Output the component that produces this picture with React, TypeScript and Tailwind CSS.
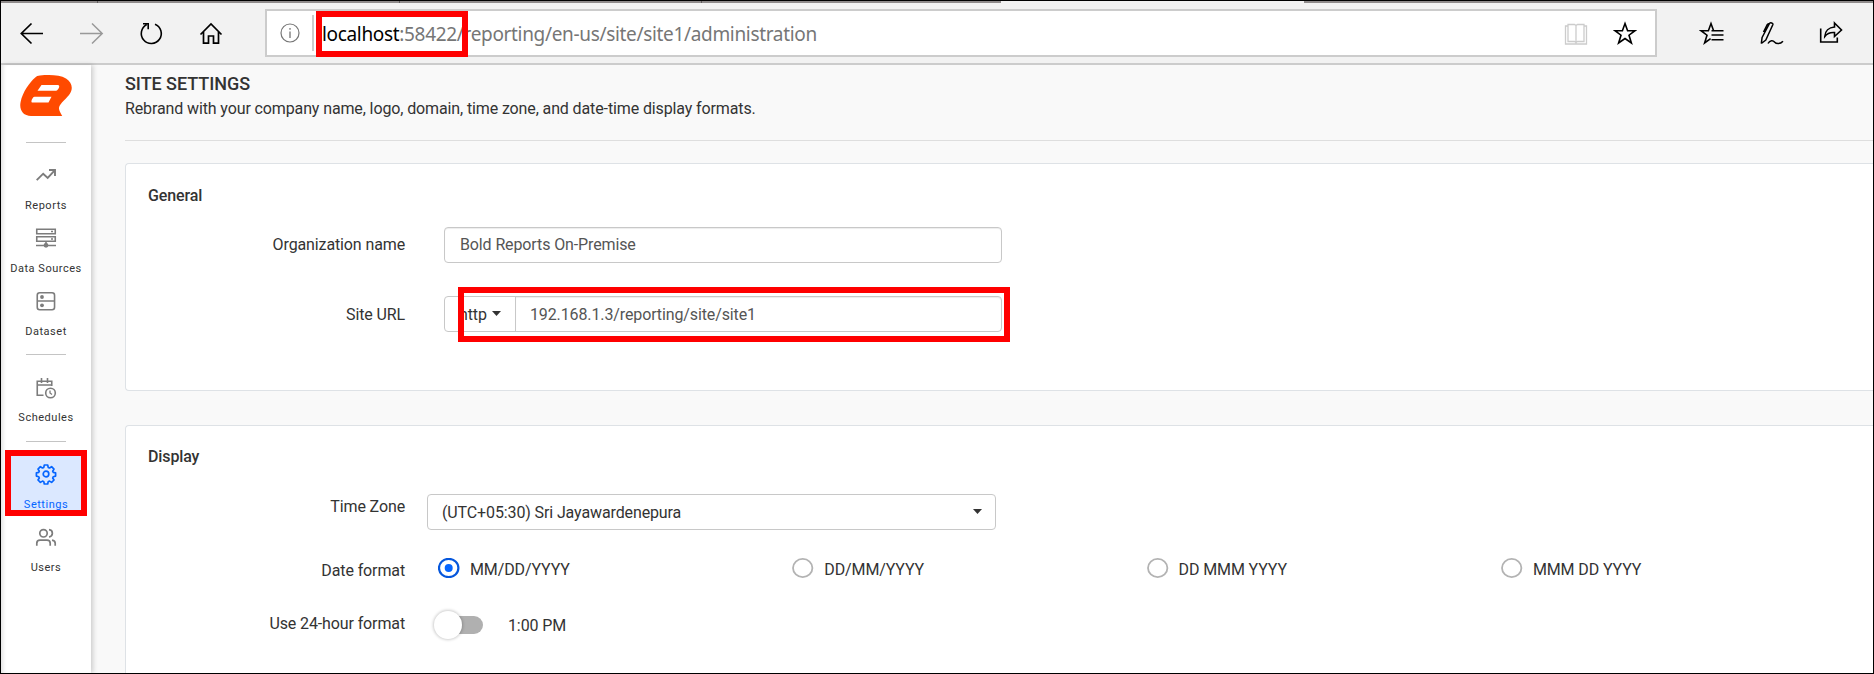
import type { ReactNode } from "react";

type IconProps = { children: ReactNode; className?: string; box?: string };

function Icon({ children, className = "", box = "0 0 24 24" }: IconProps) {
  return (
    <svg viewBox={box} fill="none" stroke="currentColor" className={"block shrink-0 " + className}>
      {children}
    </svg>
  );
}

function Mark({ className }: { className: string }) {
  return <div className={"pointer-events-none absolute z-20 border-6 border-[#ff0000] " + className} />;
}

function Caret() {
  return (
    <svg viewBox="0 0 9 5" className="block h-[5px] w-[9px] shrink-0" fill="#333">
      <path d="M0 0h9L4.5 5z" />
    </svg>
  );
}

function TabEdge() {
  return (
    <div className="flex h-[2px] w-full bg-[#8f8b8b]">
      <div className="w-[97px] border-r border-[#5f5b5b]" />
      <div className="w-[302px] border-r border-[#5f5b5b]" />
      <div className="w-[302px] border-r border-[#5f5b5b]" />
      <div className="w-[299px]" />
      <div className="w-[303px] bg-[#f2f2f2]" />
    </div>
  );
}

function Toolbar() {
  return (
    <header className="flex h-[62px] w-full items-start border-b-2 border-b-[#cccccc] bg-[#f2f2f2]">
      <div className="flex w-[264px] pt-[16px] pl-[18px] text-black">
        <Icon className="h-7 w-[60px]" box="0 0 60 28">
          <path strokeWidth="1.7" d="M24 14.5H2M12.5 4.5L2.3 14.5l10.2 10" />
        </Icon>
        <Icon className="h-7 w-[60px] text-[#999]" box="0 0 60 28">
          <path strokeWidth="1.5" d="M1 14.5h22.5M13 4.5l10.2 10-10.2 10" />
        </Icon>
        <Icon className="h-7 w-[60px]" box="0 0 60 28">
          <path strokeWidth="1.6" d="M16 5.2A10 10 0 1 1 7.7 5.6M4 4.8h5.2v5.5" />
        </Icon>
        <Icon className="h-7 w-[60px]" box="0 0 60 28">
          <path strokeWidth="1.7" d="M1.5 15.500L12 5l10.500 10.500M4.500 13v11.200h5V17h5v7.200h5V13" />
        </Icon>
      </div>
      <div className="mt-[6px] flex h-[48px] w-[1392px] items-center border-2 border-[#cccccc] bg-white">
        <Icon className="ml-[13px] h-5 w-5 text-[#767676]" box="0 0 20 20">
          <circle cx="10" cy="10" r="9" strokeWidth="1.2" />
          <path d="M10 8.5V15M10 5v1.7" strokeWidth="1.3" />
        </Icon>
        <div className="ml-[12px] h-9 w-[2px] bg-[#cccccc]" />
        <div className="ml-[8px] pt-[2px] font-['Noto_Sans',sans-serif] text-[19px] leading-6 tracking-[-0.33px] whitespace-nowrap text-[#767676]">
          <span className="text-black">localhost</span>:58422/reporting/en-us/site/site1/administration
        </div>
        <Icon className="mt-[2px] mr-[25px] ml-auto h-[22px] w-[24px] text-[#cccccc]" box="0 0 24 22">
          <path strokeWidth="1.3" d="M4 3H1.5v18h21V3H20M4 1.5h6.5l1.500 1 1.500-1H20v17h-6.500l-1.500 1-1.500-1H4zM12 2.500v18" />
        </Icon>
        <Icon className="mr-[18px] h-6 w-6 text-black" box="0 0 24 24">
          <path strokeWidth="1.6" d="M12 2.500l2.600 7.200h7.400l-6 4.500 2.400 7.800L12 17.500 5.600 22 8 14.200 2 9.700h7.400z" />
        </Icon>
      </div>
      <div className="flex pt-[18px] pl-[42px] text-black">
        <Icon className="h-6 w-[60px]" box="0 0 60 24">
          <path strokeWidth="1.6" d="M24.500 9.700H14.600L12 2.500 9.400 9.700H2l6 4.500L5.600 22l6-4.300M12.500 14h12M12.500 18.800h12M12.500 9.700h12" />
        </Icon>
        <Icon className="h-6 w-[60px]" box="0 0 60 24">
          <path strokeWidth="1.5" d="M2.300 22.500l.8-6L10.500 2.500c.8-1.400 4-.6 3.300 1.300L6.800 19l-4.500 3.500M4.500 11l3.500-7c.6-1 1.500-1.500 2.500-1.500M9 22.500c2-3.500 5-3.500 6.500-1.500 1.700 2 5.500 2.500 8.500-.8" />
        </Icon>
        <Icon className="h-6 w-[24px]" box="0 0 24 24">
          <path strokeWidth="1.6" d="M1.700 7.500V21h16.600v-4.500M15.500 2l7 7-7 6.500v-4c-4-.3-7.500 1-9.700 4C6 10 10 6.500 15.500 6z" />
        </Icon>
      </div>
    </header>
  );
}

function NavItem({ label, active, children }: { label: string; active?: boolean; children: ReactNode }) {
  return (
    <div className={"flex h-[63px] w-full flex-col items-center pt-[11px] " + (active ? "text-[#0565ff]" : "text-[#7c7c7c]")}>
      <Icon className="h-5 w-5 overflow-visible" box="0 0 20 20">
        {children}
      </Icon>
      <span className={"mt-[13px] text-[11px] leading-4 tracking-[0.52px] whitespace-nowrap " + (active ? "" : "text-[#333]")}>{label}</span>
    </div>
  );
}

function Rule({ className }: { className: string }) {
  return (
    <div className={"flex w-full justify-center " + className}>
      <div className="h-px w-10 bg-[#c4c4c4]" />
    </div>
  );
}

function Sidebar() {
  return (
    <aside className="z-10 flex h-full w-[90px] shrink-0 flex-col items-center bg-white shadow-[inset_4px_0_4px_-2px_rgba(0,0,0,0.12),2px_0_5px_rgba(0,0,0,0.18)]">
      <svg viewBox="0 0 52 41" className="mt-[10px] block h-[41px] w-[52px]">
        <path fill="#ff4a00" d="M20 .5C30-.4 40-.1 46 3.500c5 3 6.800 8 5.200 12.500-1.700 5.500-9 10-11.700 15-1.500 3.200.5 6 2.700 10H11C3 41-1 35 .6 27 2.500 17 10 7 15 2.700 16.500 1.300 18 .6 20 .5z" />
        <path fill="#fff" d="M21.500 10h16.200c1.700 0 2 1.400 1 3.200-.8 1.600-2 2.600-3.700 2.600H17.500zM14.500 21.700h17l-3 5.800H12.300c-1.300 0-.9-2.500.2-4 .5-.8 1-1.800 2-1.800z" />
      </svg>
      <Rule className="mt-[26px] h-[12px]" />
      <NavItem label="Reports">
        <path strokeWidth="1.9" d="M.7 15.200l6.500-6.500 4.500 4.200 7-7.500M13 5h6v6" />
      </NavItem>
      <NavItem label="Data Sources">
        <path strokeWidth="1.6" d="M.75 1.250h18.500v4.500H.75zM.75 8.750h18.500v4.500H.75zM15 3.500h2M15 11h2M0 17.500h20M10 13v4" />
        <circle cx="10" cy="17.3" r="2.4" fill="currentColor" stroke="none" />
      </NavItem>
      <NavItem label="Dataset">
        <rect x="1.25" y="1.75" width="17.3" height="17" rx="2.5" strokeWidth="1.6" />
        <path strokeWidth="1.5" d="M1 10h17.5" />
        <circle cx="6" cy="6" r="1.9" fill="currentColor" stroke="none" />
        <circle cx="6" cy="14.3" r="1.9" fill="currentColor" stroke="none" />
      </NavItem>
      <Rule className="h-[23px] pt-[11px]" />
      <NavItem label="Schedules">
        <path strokeWidth="1.6" d="M7.500 18.200H1.250V4.200h14.500V9M1.500 8h14M5.500 1v5M11.500 1v5" />
        <circle cx="14.5" cy="16" r="4.8" strokeWidth="1.6" />
        <path strokeWidth="1.3" d="M14 13.500V16l2 1.500" />
      </NavItem>
      <Rule className="h-[24px] pt-[12px]" />
      <div className="w-[72px] bg-[#dbe8ff]">
        <NavItem label="Settings" active>
          <circle cx="10" cy="10" r="2.8" strokeWidth="1.7" />
          <path
            strokeWidth="1.7"
            strokeLinejoin="round"
            d="M8.300 1h3.400l.5 2.400 1.300.6 2.100-1.300 2.400 2.400-1.300 2.100.6 1.200 2.300.5v3.200l-2.300.6-.6 1.300 1.300 2-2.400 2.400-2.100-1.300-1.300.6-.5 2.300H8.300l-.5-2.300-1.300-.6-2.100 1.300L2 16l1.300-2-.6-1.300-2.300-.6V8.900l2.300-.5.6-1.200L2 5.100l2.400-2.400L6.500 4l1.300-.6z"
          />
        </NavItem>
      </div>
      <NavItem label="Users">
        <circle cx="7.5" cy="6.300" r="3.7" strokeWidth="1.7" />
        <path strokeWidth="1.7" d="M.8 18.800v-2.500c0-2 1.500-3.200 3.200-3.200h7c1.800 0 3.200 1.200 3.200 3.200v2.500M13 2.700c4.500.5 4.500 6.700 0 7.300M16 13.100c2 .3 3.200 1.500 3.200 3.200v2.500" />
      </NavItem>
    </aside>
  );
}

function Label({ children, className = "" }: { children: ReactNode; className?: string }) {
  return <div className={"w-[279px] shrink-0 text-right " + className}>{children}</div>;
}

function Radio({ label, checked }: { label: string; checked?: boolean }) {
  return (
    <div className="flex w-[354.3px] shrink-0 items-start">
      <svg viewBox="0 0 22 20" className="block h-5 w-[22px]" fill="none">
        <ellipse cx="10.7" cy="10" rx="9.7" ry="9.1" strokeWidth={checked ? 2.2 : 1.8} stroke={checked ? "#0657dc" : "#b3b3b3"} />
        {checked && <circle cx="10.7" cy="10" r="4" fill="#0565ff" />}
      </svg>
      <span className="ml-[10px] pt-[2px] leading-5">{label}</span>
    </div>
  );
}

const field = "flex h-9 items-center rounded border border-[#c8c8c8] bg-white";
const card = "w-full rounded-l border border-r-0 border-[#dee2e6] bg-white";

function Settings() {
  return (
    <main className="flex min-w-0 flex-1 flex-col overflow-hidden bg-[#f9f9f9] pl-[34px]">
      <div className="h-[76px] shrink-0 border-b border-[#dedede]">
        <h1 className="pt-[8px] text-[18px] leading-[22px] font-medium tracking-[-0.05px]">SITE SETTINGS</h1>
        <p className="mt-[4px] leading-5">Rebrand with your company name, logo, domain, time zone, and date-time display formats.</p>
      </div>
      <section className={card + " mt-[22px] h-[228px] shrink-0"}>
        <h2 className="pt-[22px] pl-[22px] leading-5 font-medium">General</h2>
        <div className="mt-[21px] flex items-center">
          <Label>Organization name</Label>
          <div className={field + " ml-[39px] w-[558px] pl-[15px] text-[#555] shadow-[inset_0_1px_1px_rgba(0,0,0,0.075)]"}>Bold Reports On-Premise</div>
        </div>
        <div className="mt-[33px] flex items-center">
          <Label className="pt-[2px]">Site URL</Label>
          <div className={field + " ml-[39px] w-[558px]"}>
            <div className="flex h-full w-[71px] items-center gap-[5px] border-r border-[#c8c8c8] pt-[2px] pl-[14px]">
              http
              <span className="pb-[3px]">
                <Caret />
              </span>
            </div>
            <div className="flex h-full flex-1 items-center rounded-r pt-[2px] pl-[14px] text-[#555] shadow-[inset_0_1px_1px_rgba(0,0,0,0.075)]">192.168.1.3/reporting/site/site1</div>
          </div>
        </div>
      </section>
      <section className={card + " mt-[34px] h-[260px] shrink-0"}>
        <h2 className="pt-[21px] pl-[22px] leading-5 font-medium">Display</h2>
        <div className="mt-[27px] flex items-start">
          <Label className="pt-[3px] leading-5">Time Zone</Label>
          <div className={field + " ml-[22px] w-[569px] justify-between pr-[13px] pl-[14px]"}>
            <span className="pt-[2px]">(UTC+05:30) Sri Jayawardenepura</span>
            <span className="pb-[2px]">
              <Caret />
            </span>
          </div>
        </div>
        <div className="mt-[28px] flex items-start">
          <Label className="pt-[3px] leading-5">Date format</Label>
          <div className="ml-[33px] flex">
            <Radio label="MM/DD/YYYY" checked />
            <Radio label="DD/MM/YYYY" />
            <Radio label="DD MMM YYYY" />
            <Radio label="MMM DD YYYY" />
          </div>
        </div>
        <div className="mt-[30px] flex items-start">
          <Label className="pt-[3px] leading-5">Use 24-hour format</Label>
          <div className="mt-[5px] ml-[33px] flex h-[18px] w-[45px] rounded-full bg-[#b0b0b0]">
            <div className="-mt-[5px] -ml-[4px] h-7 w-7 rounded-full bg-white shadow-[0_0_3px_1px_rgba(0,0,0,0.2)]" />
          </div>
          <div className="ml-[25px] pt-[5px] leading-5">1:00 PM</div>
        </div>
      </section>
    </main>
  );
}

export default function App() {
  return (
    <div className="relative flex h-[674px] w-[1874px] flex-col overflow-hidden border border-black bg-[#f9f9f9] font-[Roboto,sans-serif] text-[16px] tracking-[-0.12px] text-[#333]">
      <TabEdge />
      <Toolbar />
      <div className="flex min-h-0 flex-1">
        <Sidebar />
        <Settings />
      </div>
      <Mark className="top-[10px] left-[315px] h-[46px] w-[152px]" />
      <Mark className="top-[286px] left-[457px] h-[55px] w-[552px]" />
      <Mark className="top-[449px] left-[4px] h-[66px] w-[82px]" />
    </div>
  );
}
